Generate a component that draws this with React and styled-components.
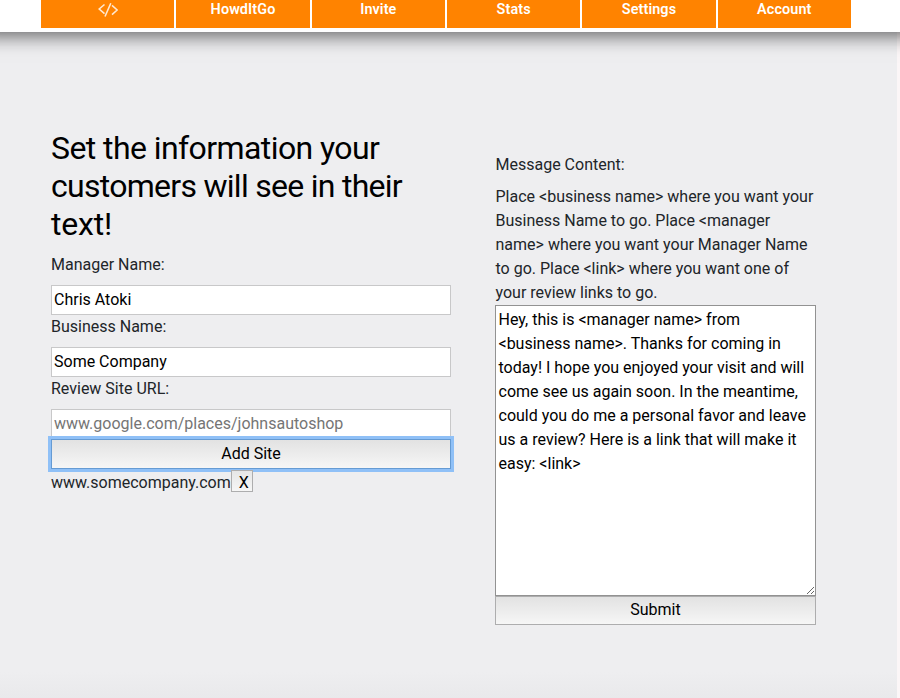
import React, { useState } from "react";
import styled, { createGlobalStyle } from "styled-components";

const GlobalStyle = createGlobalStyle`
  *, *::before, *::after { box-sizing: border-box; }
  body {
    margin: 0;
    background: #fbf6f7;
    font: 400 16px/24px Roboto, "Liberation Sans", sans-serif;
    color: #212529;
    overflow: hidden;
  }
`;

const Page = styled.div`
  display: flex;
  flex-direction: column;
  height: 698px;
`;

const Header = styled.header`
  z-index: 1;
  flex: none;
  height: 32px;
  padding: 0 49px 4px 41px;
  background: #fff;
  box-shadow: 0 -16px 18px 20px rgba(0, 0, 0, 0.59);
`;

const Nav = styled.nav`
  display: flex;
  gap: 2px;
  height: 28px;
`;

const NavItem = styled.a`
  flex: 1 1 0;
  display: flex;
  justify-content: center;
  align-items: flex-start;
  padding-top: 2px;
  background: #ff8300;
  color: #fff;
  font-size: 14.4px;
  font-weight: 600;
  letter-spacing: 0.1px;
  line-height: 16px;
`;

const NavText = styled.span`
  margin-top: -1px;
  line-height: 17px;
`;

const CodeIcon = styled.svg`
  width: 20px;
  height: 14px;
  margin-top: 1px;
  fill: none;
  stroke: #ffe8d0;
  stroke-width: 1.6;
`;

const Main = styled.main`
  flex: 1;
  display: flex;
  align-items: flex-start;
  gap: 44px;
  width: 897px;
  padding: 97px 0 0 51px;
  background: linear-gradient(#eeeef0 calc(100% - 26px), #e9e9eb);
`;

const DetailsForm = styled.section`
  width: 400px;
`;

const MessageForm = styled.section`
  width: 321px;
  padding-top: 24px;
`;

const Title = styled.h2`
  margin: 0 0 10px;
  color: #000;
  font: 400 32px/38px Roboto, "Liberation Sans", sans-serif;
  white-space: nowrap;
`;

const TitleLine = styled.span`
  display: block;
  letter-spacing: ${({ $tracking }) => $tracking}px;
`;

const Label = styled.label`
  display: block;
  margin-bottom: 8px;
  padding-left: ${({ $inset }) => $inset || 0}px;
`;

const Input = styled.input`
  display: block;
  width: 100%;
  height: 30px;
  padding: 0 2px 2px;
  border: 1px solid #c8c8c9;
  border-radius: 0;
  background: #fff;
  color: #000;
  font: inherit;
  outline: none;
  &::placeholder { color: #757575; opacity: 1; }
`;

const Button = styled.button`
  display: block;
  width: 100%;
  height: ${({ $height }) => $height}px;
  padding: 0 0 ${({ $focused }) => ($focused ? 0 : 2)}px;
  border: 1px solid ${({ $focused }) => ($focused ? "#669bd3" : "#adadae")};
  border-radius: 0;
  background: linear-gradient(#e2e2e2, #f6f6f6);
  outline: ${({ $focused }) => ($focused ? "3px solid #8fc0f7" : "none")};
  color: #000;
  font: inherit;
`;

const SiteRow = styled.div`
  display: flex;
  align-items: flex-start;
  padding-top: 2px;
`;

const RemoveButton = styled.button`
  position: relative;
  z-index: 1;
  width: 22px;
  height: 22px;
  margin-top: -1px;
  padding: 3px 0 0 4px;
  border: 1px solid #adadae;
  border-radius: 0;
  background: linear-gradient(#e6e6e6, #f6f6f6);
  color: #000;
  font: inherit;
  line-height: 17px;
`;

const Help = styled.p`
  margin: 0;
  padding-left: 0.5px;
`;

const Message = styled.textarea`
  display: block;
  width: 321px;
  height: 291px;
  padding: 2px 2px 2px 2.5px;
  border: 1px solid #929292;
  border-radius: 0;
  background: #fff;
  color: #000;
  font: inherit;
  resize: both;
  outline: none;
`;

const navLabels = ["HowdItGo", "Invite", "Stats", "Settings", "Account"];

const titleLines = [
  { text: "Set the information your", tracking: -0.58 },
  { text: "customers will see in their", tracking: -0.72 },
  { text: "text!", tracking: -0.2 },
];

const defaultMessage =
  "Hey, this is <manager name> from <business name>. Thanks for coming in today! I hope you enjoyed your visit and will come see us again soon. In the meantime, could you do me a personal favor and leave us a review? Here is a link that will make it easy: <link>";

export default function App() {
  const [message, setMessage] = useState(defaultMessage);

  return (
    <Page>
      <GlobalStyle />
      <Header>
        <Nav>
          <NavItem>
            <CodeIcon viewBox="0 0 20 14" aria-label="Home">
              <path d="M6.5 1.5 1.2 6l5.3 4.7M14 2.3 19.2 7 14 11.7M12.8.3 7 13.5" />
            </CodeIcon>
          </NavItem>
          {navLabels.map((label) => (
            <NavItem key={label}>
              <NavText>{label}</NavText>
            </NavItem>
          ))}
        </Nav>
      </Header>
      <Main>
        <DetailsForm>
          <Title>
            {titleLines.map(({ text, tracking }) => (
              <TitleLine key={text} $tracking={tracking}>{text}</TitleLine>
            ))}
          </Title>
          <Label htmlFor="manager">Manager Name:</Label>
          <Input id="manager" defaultValue="Chris Atoki" />
          <Label htmlFor="business">Business Name:</Label>
          <Input id="business" defaultValue="Some Company" />
          <Label htmlFor="site">Review Site URL:</Label>
          <Input id="site" placeholder="www.google.com/places/johnsautoshop" />
          <Button type="button" $height={30} $focused>Add Site</Button>
          <SiteRow>
            <span>www.somecompany.com</span>
            <RemoveButton type="button">X</RemoveButton>
          </SiteRow>
        </DetailsForm>
        <MessageForm>
          <Label htmlFor="message" $inset={0.5}>Message Content:</Label>
          <Help>
            Place &lt;business name&gt; where you want your Business Name to go. Place
            &lt;manager name&gt; where you want your Manager Name to go. Place &lt;link&gt;
            where you want one of your review links to go.
          </Help>
          <Message
            id="message"
            value={message}
            onChange={(event) => setMessage(event.target.value)}
          />
          <Button type="button" $height={29}>Submit</Button>
        </MessageForm>
      </Main>
    </Page>
  );
}
